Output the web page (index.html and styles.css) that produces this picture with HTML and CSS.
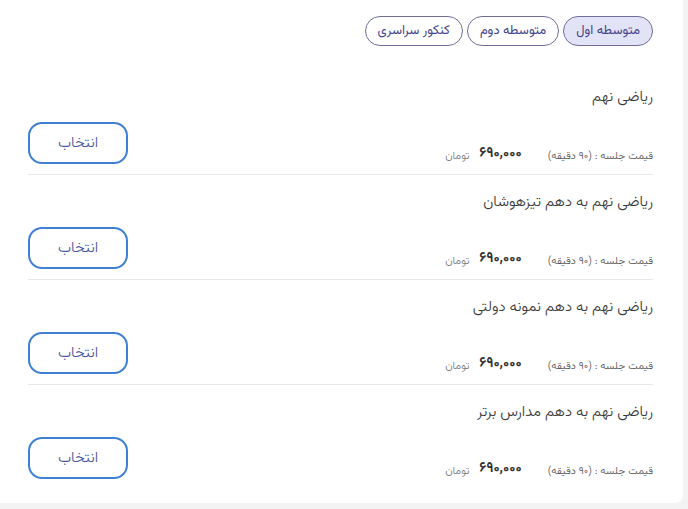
FILE: index.html
```html
<!DOCTYPE html>
<html lang="fa" dir="rtl">
<head>
<meta charset="utf-8">
<link rel="stylesheet" href="styles.css">
</head>
<body>
<div class="card">
  <div class="tabs">
    <button class="tab active">متوسطه اول</button>
    <button class="tab">متوسطه دوم</button>
    <button class="tab">کنکور سراسری</button>
  </div>
  <div class="list">
    <div class="item">
      <div class="title">ریاضی نهم</div>
      <div class="row">
        <div class="price">
          <span class="label">قیمت جلسه : (۹۰ دقیقه)</span>
          <span class="amount">۶۹۰,۰۰۰</span>
          <span class="unit">تومان</span>
        </div>
        <button class="select">انتخاب</button>
      </div>
    </div>
    <div class="item">
      <div class="title">ریاضی نهم به دهم تیزهوشان</div>
      <div class="row">
        <div class="price">
          <span class="label">قیمت جلسه : (۹۰ دقیقه)</span>
          <span class="amount">۶۹۰,۰۰۰</span>
          <span class="unit">تومان</span>
        </div>
        <button class="select">انتخاب</button>
      </div>
    </div>
    <div class="item">
      <div class="title">ریاضی نهم به دهم نمونه دولتی</div>
      <div class="row">
        <div class="price">
          <span class="label">قیمت جلسه : (۹۰ دقیقه)</span>
          <span class="amount">۶۹۰,۰۰۰</span>
          <span class="unit">تومان</span>
        </div>
        <button class="select">انتخاب</button>
      </div>
    </div>
    <div class="item last">
      <div class="title">ریاضی نهم به دهم مدارس برتر</div>
      <div class="row">
        <div class="price">
          <span class="label">قیمت جلسه : (۹۰ دقیقه)</span>
          <span class="amount">۶۹۰,۰۰۰</span>
          <span class="unit">تومان</span>
        </div>
        <button class="select">انتخاب</button>
      </div>
    </div>
  </div>
</div>
</body>
</html>
```
FILE: styles.css
```css
html, body {
  margin: 0;
  padding: 0;
  background: #f3f3f4;
}
body {
  font-family: "Vazirmatn", "DejaVu Sans", sans-serif;
  width: 688px;
  height: 509px;
  overflow: hidden;
}
.card {
  width: 683px;
  height: 503px;
  margin-right: 5px;
  background: #ffffff;
  border-bottom-right-radius: 8px;
  box-sizing: border-box;
  padding: 16px 30px 0 28px;
}
.tabs {
  display: flex;
  gap: 4px;
}
.tab {
  height: 30px;
  padding: 0 12px;
  border: 1px solid #6e6e99;
  border-radius: 15px;
  background: #ffffff;
  color: #45458a;
  font-family: inherit;
  font-size: 13px;
  cursor: pointer;
}
.tab.active {
  background: #e3e3f8;
}
.list {
  margin-top: 24px;
}
.item {
  padding: 16px 0 10px;
  border-bottom: 1px solid #e8e8e8;
}
.item.last {
  border-bottom: none;
}
.title {
  font-size: 15px;
  font-weight: 300;
  line-height: 24px;
  color: #3a3a3a;
}
.row {
  margin-top: 12px;
  display: flex;
  justify-content: space-between;
  align-items: flex-end;
}
.price {
  display: flex;
  align-items: baseline;
  line-height: 12px;
  padding-bottom: 1px;
}
.label {
  font-size: 10.7px;
  font-weight: 300;
  color: #555555;
}
.amount {
  margin-right: 26px;
  font-size: 14px;
  font-weight: bold;
  color: #333333;
  position: relative;
  top: -2px;
}
.unit {
  margin-right: 10px;
  font-size: 11px;
  font-weight: 300;
  color: #777777;
}
.select {
  width: 100px;
  height: 42px;
  border: 2px solid #3f7fd4;
  border-radius: 14px;
  background: #ffffff;
  color: #4a55a2;
  font-family: inherit;
  font-size: 15px;
  font-weight: 300;
  cursor: pointer;
}
```
